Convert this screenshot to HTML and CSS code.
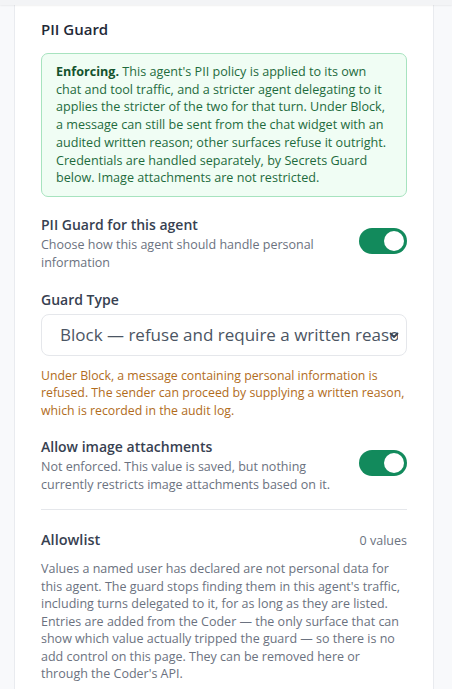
FILE: index.html
```html
<!DOCTYPE html>
<html lang="en">

<head>
    <meta charset="UTF-8">
    <meta name="viewport" content="width=device-width, initial-scale=1.0">
    <title>PII Guard</title>
    <link rel="stylesheet" href="styles.css">
</head>

<body>

    <div class="topbar"></div>

    <div class="card">
        <h2 class="card-title">PII Guard</h2>

        <p class="notice"><b>Enforcing.</b> This agent's PII policy is applied to its own chat and tool traffic, and a stricter agent delegating to it applies the stricter of the two for that turn. Under Block, a message can still be sent from the chat widget with an audited written reason; other surfaces refuse it outright. Credentials are handled separately, by Secrets Guard below. Image attachments are not restricted.</p>

        <div class="setting-row">
            <div class="setting-text">
                <div class="setting-label">PII Guard for this agent</div>
                <div class="setting-desc">Choose how this agent should handle personal information</div>
            </div>
            <label class="switch">
                <input type="checkbox" checked>
                <span class="slider"></span>
            </label>
        </div>

        <div class="field">
            <label for="guardType" class="field-label">Guard Type</label>
            <div class="select-wrap">
                <select id="guardType">
                    <option>Block — refuse and require a written reason</option>
                    <option>Warn — allow but flag the message</option>
                    <option>Off</option>
                </select>
                <svg class="chevron" width="10" height="8" viewBox="0 0 10 8">
                    <path d="M1.5 2.5 L5 6 L8.5 2.5" fill="none" stroke="#374151" stroke-width="1.8" stroke-linecap="round" stroke-linejoin="round"/>
                </svg>
            </div>
            <p class="field-warning">Under Block, a message containing personal information is refused. The sender can proceed by supplying a written reason, which is recorded in the audit log.</p>
        </div>

        <div class="setting-row">
            <div class="setting-text">
                <div class="setting-label">Allow image attachments</div>
                <div class="setting-desc">Not enforced. This value is saved, but nothing currently restricts image attachments based on it.</div>
            </div>
            <label class="switch">
                <input type="checkbox" checked>
                <span class="slider"></span>
            </label>
        </div>

        <hr class="divider">

        <div class="allowlist-head">
            <h3>Allowlist</h3>
            <span class="count">0 values</span>
        </div>
        <p class="allowlist-desc">Values a named user has declared are not personal data for this agent. The guard stops finding them in this agent's traffic, including turns delegated to it, for as long as they are listed. Entries are added from the Coder — the only surface that can show which value actually tripped the guard — so there is no add control on this page. They can be removed here or through the Coder's API.</p>
    </div>

</body>

</html>
```

FILE: styles.css
```css
* {
    box-sizing: border-box;
}

body {
    font-family: "Open Sans", "Noto Sans", Arial, sans-serif;
    background-color: #f8f9fb;
    margin: 0;
    color: #374151;
}

.topbar {
    height: 5px;
    background-color: #f3f4f6;
    box-shadow: 0 1px 2px rgba(0, 0, 0, 0.06);
    position: relative;
}

.card {
    width: 420px;
    margin-left: 14px;
    background-color: #fff;
    border-left: 1px solid #e9ebef;
    border-right: 1px solid #e9ebef;
    padding: 14px 26px 20px 26px;
}

.card-title {
    font-size: 15px;
    font-weight: 600;
    color: #1f2937;
    margin: 0 0 14px 0;
    line-height: 20px;
}

.notice {
    margin: 0;
    background-color: #f0fdf4;
    border: 1px solid #a7e3bf;
    border-radius: 7px;
    padding: 9px 14px 9px 14px;
    font-size: 12.6px;
    line-height: 17.7px;
    color: #1e6b3d;
}

.notice b {
    color: #14532d;
    font-weight: 700;
}

.setting-row {
    display: flex;
    align-items: flex-start;
    justify-content: space-between;
    gap: 20px;
    margin-top: 18px;
}

.setting-text {
    flex: 1;
}

.setting-label {
    font-size: 14px;
    font-weight: 600;
    color: #374151;
    line-height: 20px;
}

.setting-desc {
    font-size: 12.5px;
    line-height: 18px;
    color: #6b7280;
    margin-top: 1px;
}

.switch {
    position: relative;
    width: 48px;
    height: 26px;
    flex-shrink: 0;
    margin-top: 13px;
}

.switch input {
    display: none;
}

.slider {
    position: absolute;
    inset: 0;
    background-color: #128a5c;
    border-radius: 13px;
}

.slider::after {
    content: "";
    position: absolute;
    top: 3px;
    right: 3px;
    width: 20px;
    height: 20px;
    border-radius: 50%;
    background-color: #fff;
}

.field {
    margin-top: 18px;
}

.field-label {
    display: block;
    font-size: 14px;
    font-weight: 600;
    color: #374151;
    line-height: 20px;
    margin-bottom: 4px;
}

.select-wrap {
    position: relative;
}

.select-wrap select {
    width: 100%;
    height: 42px;
    appearance: none;
    -webkit-appearance: none;
    border: 1px solid #e5e7eb;
    border-radius: 8px;
    background-color: #fff;
    font-family: inherit;
    font-size: 17px;
    color: #4b5563;
    padding: 0 8px 0 18px;
}

.chevron {
    position: absolute;
    right: 8px;
    top: 17px;
}

.field-warning {
    font-size: 12.3px;
    line-height: 17.5px;
    color: #b16c1c;
    margin: 11px 0 0 0;
}

.divider {
    border: none;
    border-top: 1px solid #e5e7eb;
    margin: 15px 0 0 0;
}

.allowlist-head {
    display: flex;
    justify-content: space-between;
    align-items: baseline;
    margin-top: 20px;
}

.allowlist-head h3 {
    margin: 0;
    font-size: 14.5px;
    font-weight: 600;
    color: #374151;
    line-height: 20px;
}

.count {
    font-size: 12.5px;
    color: #6b7280;
}

.allowlist-desc {
    font-size: 12.5px;
    line-height: 17.5px;
    color: #6b7280;
    margin: 10px 0 0 0;
}
```
